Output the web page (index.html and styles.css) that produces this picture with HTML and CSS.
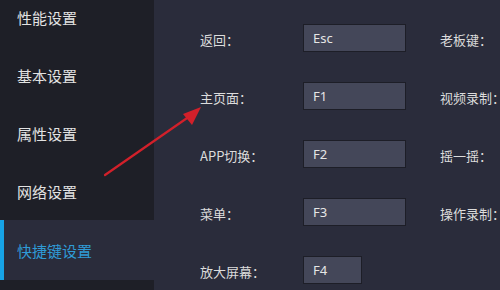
FILE: index.html
```html
<!DOCTYPE html>
<html lang="zh">
<head>
<meta charset="utf-8">
<title>快捷键设置</title>
<link rel="stylesheet" href="styles.css">
</head>
<body>
<div class="app">
  <nav class="sidebar">
    <div class="nav-item">性能设置</div>
    <div class="nav-item">基本设置</div>
    <div class="nav-item">属性设置</div>
    <div class="nav-item">网络设置</div>
    <div class="nav-item active">快捷键设置</div>
    <div class="nav-item"></div>
  </nav>
  <main class="content">
    <div class="grid">
      <div class="label">返回：</div>
      <div class="key">Esc</div>
      <div class="label">老板键：</div>

      <div class="label">主页面：</div>
      <div class="key">F1</div>
      <div class="label">视频录制：</div>

      <div class="label">APP切换：</div>
      <div class="key">F2</div>
      <div class="label">摇一摇：</div>

      <div class="label">菜单：</div>
      <div class="key">F3</div>
      <div class="label">操作录制：</div>

      <div class="label">放大屏幕：</div>
      <div class="key short">F4</div>
      <div class="label"></div>
    </div>
  </main>
  <svg class="arrow" width="500" height="290" viewBox="0 0 500 290">
    <line x1="105" y1="175" x2="190" y2="116" stroke="#d2202a" stroke-width="2.2" stroke-linecap="round"/>
    <polygon points="201,107 183,114 192,125" fill="#d2202a"/>
  </svg>
</div>
</body>
</html>
```

FILE: styles.css
```css
html, body {
  margin: 0;
  padding: 0;
  width: 500px;
  height: 290px;
  overflow: hidden;
  background: #2a2c3b;
  font-family: "Noto Sans", "Noto Sans CJK SC", sans-serif;
}

.app {
  position: relative;
  display: flex;
  width: 500px;
  height: 290px;
  overflow: hidden;
}

.sidebar {
  width: 154px;
  flex: none;
  display: flex;
  flex-direction: column;
  margin-top: -12px;
}

.nav-item {
  height: 58px;
  flex: none;
  display: flex;
  align-items: center;
  padding-left: 17px;
  background: #1e1f27;
  color: #e2e2e2;
  font-size: 15px;
  font-family: "Noto Sans CJK SC", sans-serif;
  box-sizing: border-box;
}

.nav-item.active {
  height: 60px;
  background: #2a2c3b;
  color: #2f9bd6;
  border-left: 4px solid #17a3e6;
  padding-left: 13px;
}

.content {
  flex: 1;
  padding: 10px 0 0 46px;
}

.grid {
  display: grid;
  grid-template-columns: 103px 103px auto;
  grid-auto-rows: 58px;
  column-gap: 0;
  align-items: center;
}

.grid .label:nth-child(3n) {
  margin-left: 34px;
}

.label {
  color: #dcdcdc;
  font-size: 13px;
  font-family: "Noto Sans CJK SC", sans-serif;
  white-space: nowrap;
}

.key {
  height: 28px;
  box-sizing: border-box;
  border: 1px solid #1d1e27;
  background: #444759;
  color: #e6e6e6;
  font-size: 13px;
  display: flex;
  align-items: center;
  padding-left: 9px;
  margin-top: -2px;
}

.key.short {
  width: 59px;
}

.arrow {
  position: absolute;
  left: 0;
  top: 0;
  pointer-events: none;
}
```
